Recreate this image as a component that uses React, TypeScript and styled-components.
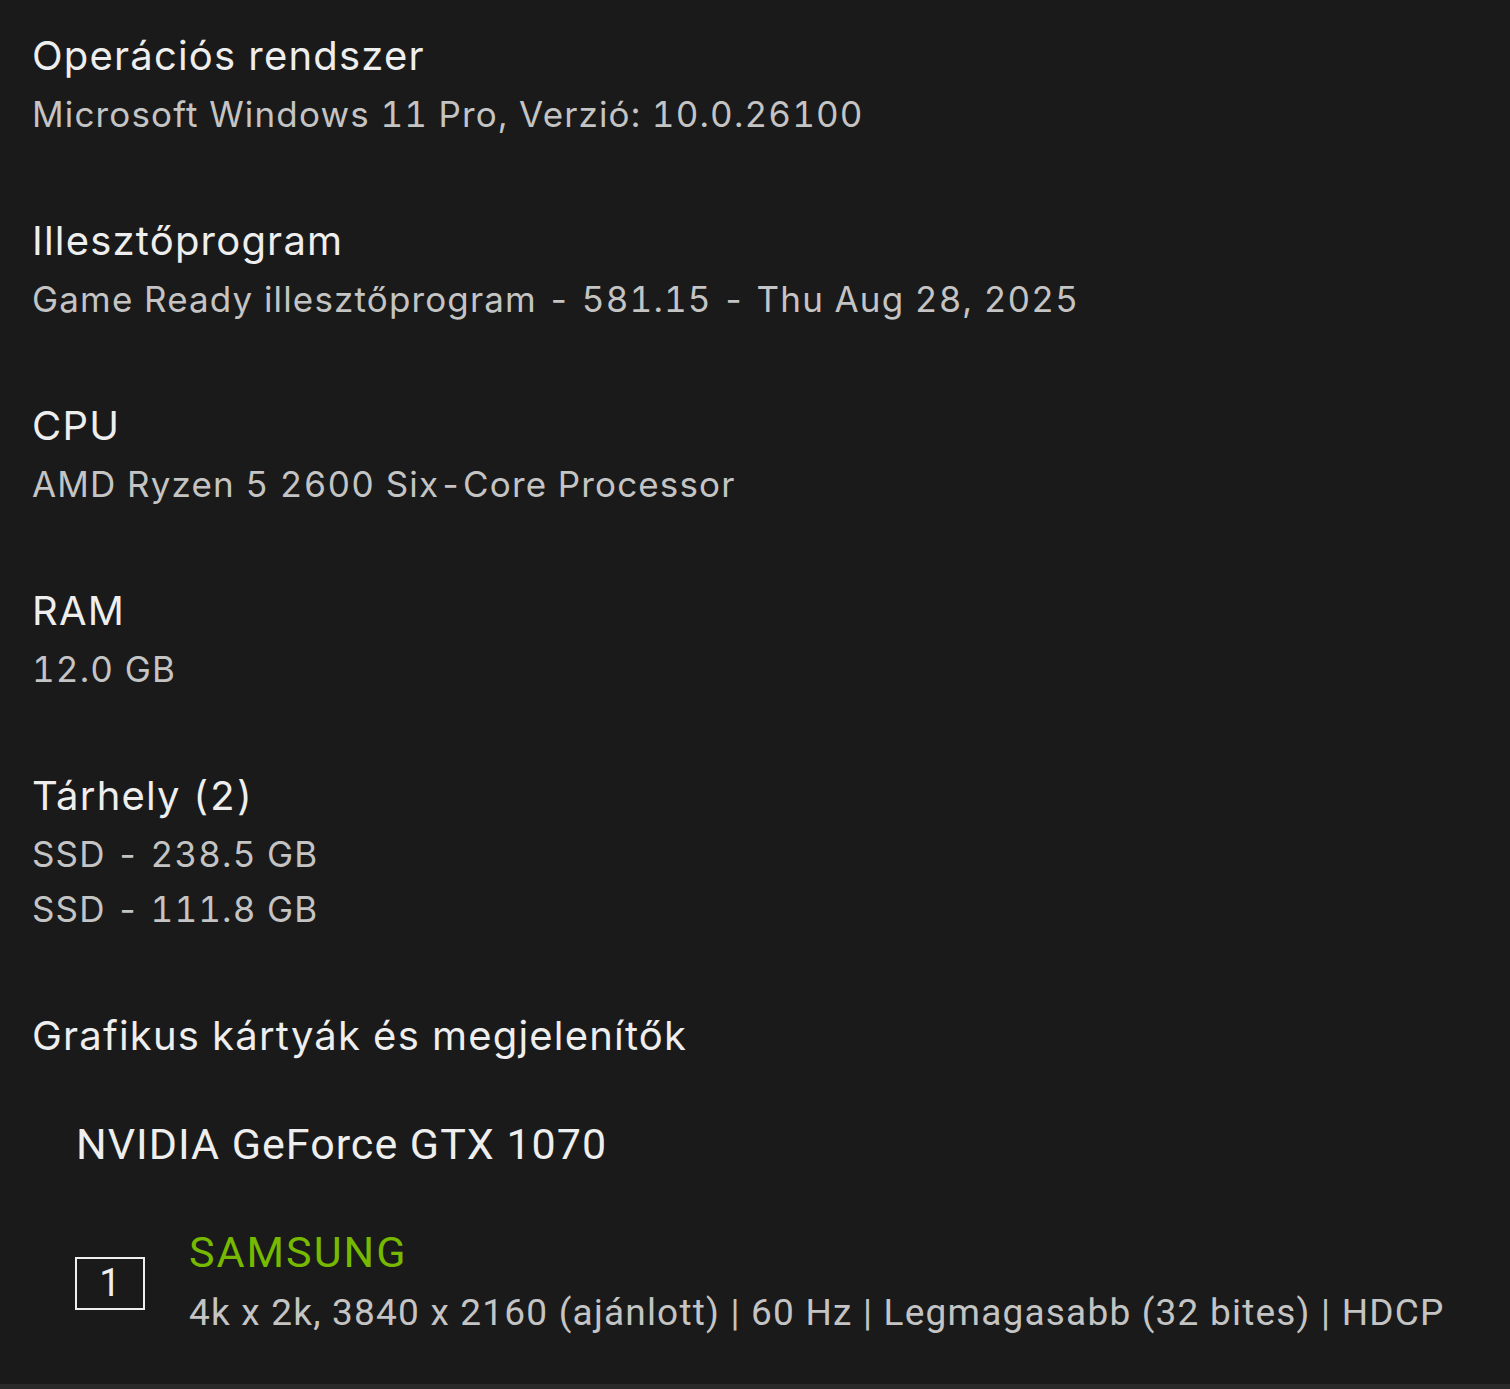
import React from "react";
import styled, { createGlobalStyle } from "styled-components";

const GlobalStyle = createGlobalStyle`
    html, body {
        margin: 0;
        padding: 0;
        background: #1a1a1a;
    }
    body {
        font-family: Inter, "Noto Sans", sans-serif;
    }
`;

type Section = { title: string; values: string[] };

const sections: Section[] = [
    { title: "Operációs rendszer", values: ["Microsoft Windows 11 Pro, Verzió: 10.0.26100"] },
    { title: "Illesztőprogram", values: ["Game Ready illesztőprogram - 581.15 - Thu Aug 28, 2025"] },
    { title: "CPU", values: ["AMD Ryzen 5 2600 Six-Core Processor"] },
    { title: "RAM", values: ["12.0 GB"] },
    { title: "Tárhely (2)", values: ["SSD - 238.5 GB", "SSD - 111.8 GB"] },
];

export default function App() {
    return (
        <Page>
            <GlobalStyle />
            <Content>
                {sections.map(({ title, values }) => (
                    <InfoBlock key={title}>
                        <Title>{title}</Title>
                        {values.map(v => (
                            <Value key={v}>{v}</Value>
                        ))}
                    </InfoBlock>
                ))}
                <InfoBlock>
                    <Title>Grafikus kártyák és megjelenítők</Title>
                    <GpuName>NVIDIA GeForce GTX 1070</GpuName>
                    <Display>
                        <DisplayIndex>1</DisplayIndex>
                        <DisplayText>
                            <DisplayName>SAMSUNG</DisplayName>
                            <DisplayInfo>
                                4k x 2k, 3840 x 2160 (ajánlott) | 60 Hz | Legmagasabb (32 bites) | HDCP
                            </DisplayInfo>
                        </DisplayText>
                    </Display>
                </InfoBlock>
            </Content>
            <BottomEdge />
        </Page>
    );
}

const Page = styled.div`
    min-height: 1389px;
    background: #1a1a1a;
    display: flex;
    flex-direction: column;
`;

const Content = styled.div`
    flex: 1;
    padding: 25px 0 0 32px;
    display: flex;
    flex-direction: column;
    gap: 68px;
`;

const InfoBlock = styled.div`
    display: flex;
    flex-direction: column;
`;

const Title = styled.div`
    color: #eeeeee;
    font-size: 40px;
    line-height: 62px;
    font-weight: 400;
    letter-spacing: 1.2px;
    font-variant-numeric: tabular-nums;
    white-space: nowrap;
`;

const Value = styled.div`
    color: #c4c4c4;
    font-size: 35px;
    line-height: 55px;
    letter-spacing: 1.15px;
    font-variant-numeric: tabular-nums;
    white-space: nowrap;
`;

const GpuName = styled.div`
    color: #eeeeee;
    font-family: Roboto, "Liberation Sans", sans-serif;
    font-size: 43px;
    line-height: 62px;
    letter-spacing: 1px;
    margin: 46px 0 0 44px;
`;

const Display = styled.div`
    display: flex;
    align-items: center;
    margin: 47px 0 0 43px;
`;

const DisplayIndex = styled.div`
    box-sizing: border-box;
    width: 70px;
    height: 53px;
    border: 2px solid #eeeeee;
    color: #eeeeee;
    font-family: Roboto, "Liberation Sans", sans-serif;
    font-size: 38px;
    display: flex;
    align-items: center;
    justify-content: center;
    margin-right: 44px;
`;

const DisplayText = styled.div`
    display: flex;
    flex-direction: column;
`;

const DisplayName = styled.div`
    color: #76b900;
    font-family: Roboto, "Liberation Sans", sans-serif;
    font-size: 43px;
    line-height: 60px;
    letter-spacing: 2px;
`;

const DisplayInfo = styled.div`
    color: #c4c4c4;
    font-family: Roboto, "Liberation Sans", sans-serif;
    font-size: 37px;
    line-height: 62px;
    letter-spacing: 1.2px;
    white-space: nowrap;
`;

const BottomEdge = styled.div`
    height: 5px;
    background: #2a2a2a;
`;
